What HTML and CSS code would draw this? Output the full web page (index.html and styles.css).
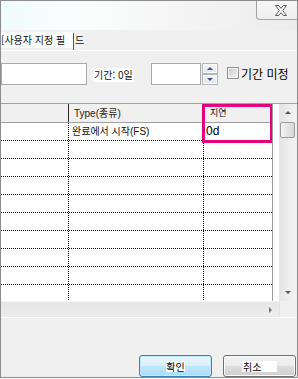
FILE: index.html
```html
<!DOCTYPE html>
<html lang="ko">
<head>
<meta charset="utf-8">
<title>사용자 지정 필드</title>
<link rel="stylesheet" href="styles.css">
</head>
<body>
<div class="window">
  <div class="titlebar">
    <div class="close-btn">
      <svg width="12" height="11" viewBox="0 0 12 11"><polygon points="0.5,0.5 3.7,0.5 6,3.3 8.3,0.5 11.5,0.5 7.8,5.5 11.5,10.5 8.3,10.5 6,7.7 3.7,10.5 0.5,10.5 4.2,5.5" fill="#f7f7f7" stroke="#5d5d5d" stroke-width="1" stroke-linejoin="round"/></svg>
    </div>
  </div>
  <div class="tabrow">
    <span class="tab-label">[사용자 지정 필</span><span class="tab-caret"></span><span class="tab-rest">드</span>
  </div>
  <div class="fields">
    <div class="textbox name-box"></div>
    <span class="dur-label">기간: 0일</span>
    <div class="textbox dur-box"></div>
    <div class="spin">
      <div class="spin-btn"><span class="tri-up"></span></div>
      <div class="spin-btn"><span class="tri-down"></span></div>
    </div>
    <div class="check"><span class="check-box"></span><span class="check-text">기간 미정</span></div>
  </div>
  <div class="grid">
    <div class="grid-main">
      <div class="table">
        <div class="row head">
          <div class="cell c1"></div>
          <div class="cell c2">Type(종류)</div>
          <div class="cell c3 delay-head">지연</div>
        </div>
        <div class="row"><div class="cell c1"></div><div class="cell c2">완료에서 시작(FS)</div><div class="cell c3 val">0d</div></div>
        <div class="row"><div class="cell c1"></div><div class="cell c2"></div><div class="cell c3"></div></div>
        <div class="row"><div class="cell c1"></div><div class="cell c2"></div><div class="cell c3"></div></div>
        <div class="row"><div class="cell c1"></div><div class="cell c2"></div><div class="cell c3"></div></div>
        <div class="row"><div class="cell c1"></div><div class="cell c2"></div><div class="cell c3"></div></div>
        <div class="row"><div class="cell c1"></div><div class="cell c2"></div><div class="cell c3"></div></div>
        <div class="row"><div class="cell c1"></div><div class="cell c2"></div><div class="cell c3"></div></div>
        <div class="row"><div class="cell c1"></div><div class="cell c2"></div><div class="cell c3"></div></div>
        <div class="row"><div class="cell c1"></div><div class="cell c2"></div><div class="cell c3"></div></div>
        <div class="row"><div class="cell c1"></div><div class="cell c2"></div><div class="cell c3"></div></div>
        <div class="highlight"></div>
      </div>
      <div class="vgap"></div>
      <div class="vscroll">
        <div class="sb-btn"><span class="tri-up gray"></span></div>
        <div class="thumb"></div>
        <div class="track"></div>
        <div class="sb-btn"><span class="tri-down gray"></span></div>
      </div>
      <div class="vedge"></div>
    </div>
    <div class="hscroll-row">
      <div class="hscroll"><span class="tri-right"></span></div>
      <div class="corner"></div>
    </div>
  </div>
  <div class="spacer"></div>
  <div class="footer">
    <button class="btn ok"><span class="btn-text">확인</span></button>
    <button class="btn cancel"><span class="btn-text">취소</span></button>
  </div>
</div>
</body>
</html>
```

FILE: styles.css
```css
* { box-sizing: border-box; }
html, body { margin: 0; padding: 0; background: #fff; }
body {
  width: 298px;
  height: 379px;
  overflow: hidden;
  font-family: "Noto Sans CJK KR", "Liberation Sans", sans-serif;
  color: #111;
}
.window {
  width: 298px;
  height: 378px;
  border: 1px solid #8c8c8c;
  background: #f0f0f0;
  display: flex;
  flex-direction: column;
  overflow: hidden;
}

/* title bar */
.titlebar {
  height: 29px;
  flex: none;
  display: flex;
  justify-content: flex-end;
  align-items: flex-start;
  background: linear-gradient(to right, #f1fcfd 0%, #fbfdfd 30%, #f6f6f6 55%, #ececec 100%);
}
.close-btn {
  width: 41px;
  height: 19px;
  border-left: 1px solid #a3a3a3;
  border-bottom: 1px solid #a3a3a3;
  border-bottom-left-radius: 4px;
  background: linear-gradient(#f7f7f7, #efefef);
  padding: 4px 0 0 18px;
}
.close-btn svg { display: block; }

/* tab row */
.tabrow {
  height: 21px;
  flex: none;
  border-bottom: 1px solid #fff;
  display: flex;
  align-items: flex-start;
  font-size: 10px;
  line-height: 16px;
}
.tab-label {
  margin-top: 2px;
  height: 16px;
  width: 72px;
  background: #fff;
  white-space: nowrap;
  overflow: hidden;
}
.tab-caret {
  margin-top: 3px;
  width: 1px;
  height: 17px;
  background: #555;
}
.tab-rest { margin-top: 2px; margin-left: 1px; }

/* fields row */
.fields {
  height: 22px;
  margin-top: 12px;
  flex: none;
  display: flex;
  align-items: flex-start;
}
.textbox {
  height: 22px;
  background: #fff;
  border: 1px solid #a9a9a9;
}
.name-box { width: 86px; }
.dur-label {
  margin: 5px 0 0 6px;
  width: 41px;
  height: 14px;
  background: #fff;
  font-size: 10px;
  line-height: 14px;
  padding-left: 1px;
  white-space: nowrap;
}
.dur-box { width: 50px; margin-left: 17px; }
.spin {
  margin-left: 1px;
  width: 16px;
  height: 22px;
  display: flex;
  flex-direction: column;
}
.spin-btn {
  flex: 1;
  border: 1px solid #b3b6ba;
  background: linear-gradient(#f5f7f9, #dfe4ea);
  box-shadow: inset 0 0 0 1px #fbfbfb;
  display: flex;
  align-items: center;
  justify-content: center;
}
.tri-up {
  width: 0; height: 0;
  border-left: 3px solid transparent;
  border-right: 3px solid transparent;
  border-bottom: 3px solid #3e5277;
}
.tri-down {
  width: 0; height: 0;
  border-left: 3px solid transparent;
  border-right: 3px solid transparent;
  border-top: 3px solid #3e5277;
}
.tri-up.gray { border-bottom-color: #555; }
.tri-down.gray { border-top-color: #555; }
.tri-right {
  width: 0; height: 0;
  border-top: 3px solid transparent;
  border-bottom: 3px solid transparent;
  border-left: 3px solid #777;
}
.check { display: flex; align-items: flex-start; margin-left: 9px; }
.check-box {
  margin-top: 4px;
  width: 12px;
  height: 12px;
  border: 1px solid #8e8f8f;
  background: linear-gradient(135deg, #cbcbcb, #f2f2f2);
  box-shadow: inset 0 0 0 1px #f6f6f6;
}
.check-text {
  margin-left: 2px;
  font-size: 12px;
  line-height: 21px;
  color: #000;
  white-space: nowrap;
}

/* grid */
.grid {
  margin-top: 18px;
  flex: none;
  border-top: 1px solid #a0a0a0;
}
.grid-main {
  height: 197px;
  display: flex;
  background: #fff;
}
.table {
  position: relative;
  width: 272px;
  flex: none;
  overflow: hidden;
  border-right: 1px solid #a0a0a0;
}
.row {
  display: flex;
  height: 18px;
  border-bottom: 1px dotted #000;
}
.row.head {
  height: 19px;
  background: #f0f0f0;
  border-bottom: 1px solid #a0a0a0;
}
.cell {
  height: 100%;
  font-size: 10px;
  line-height: 17px;
  white-space: nowrap;
  overflow: hidden;
}
.c1 { width: 68px; border-right: 1px dotted #000; }
.c2 { width: 135px; border-right: 1px dotted #000; padding-left: 3px; }
.c3 { width: 68px; padding-left: 2px; }
.head .c1, .head .c2 { border-right: 1px solid #2a2a2a; }
.head .c2 { padding-left: 5px; font-family: "Liberation Sans", "Noto Sans CJK KR", sans-serif; line-height: 19px; color: #2a1a10; }
.head .delay-head { padding-left: 6px; font-size: 9px; line-height: 18px; }
.row .c2 { font-family: "Liberation Sans", "Noto Sans CJK KR", sans-serif; }
.val {
  font-family: "Liberation Sans", sans-serif;
  font-size: 12px;
  line-height: 17px;
  color: #000;
}
.highlight {
  position: absolute;
  left: 201px;
  top: 0;
  width: 71px;
  height: 39px;
  border: 3px solid #e6007e;
}
.vgap { width: 6px; flex: none; background: #fff; }
.vscroll {
  width: 17px;
  flex: none;
  display: flex;
  flex-direction: column;
  background: linear-gradient(to right, #e3e3e3, #eeeeee 60%, #f2f2f2);
}
.sb-btn {
  height: 17px;
  flex: none;
  display: flex;
  align-items: center;
  justify-content: center;
}
.thumb {
  height: 16px;
  margin: 1px 1px 0 1px;
  flex: none;
  border: 1px solid #9a9a9a;
  border-radius: 2px;
  background: linear-gradient(to right, #f4f4f4, #e4e4e4 50%, #d8d8d8);
}
.track { flex: 1; }
.vedge { flex: 1; background: #f0f0f0; }
.hscroll-row {
  height: 17px;
  display: flex;
  border-bottom: 1px solid #fff;
}
.hscroll {
  width: 278px;
  flex: none;
  background: linear-gradient(#e6e6e6, #ececec);
  border-top: 1px solid #f4f4f4;
  display: flex;
  align-items: center;
  justify-content: flex-end;
  padding-right: 7px;
}
.corner { flex: 1; background: #f0f0f0; border-left: 1px solid #e2e2e2; }

/* footer */
.spacer { flex: 1; }
.footer {
  flex: none;
  display: flex;
  justify-content: flex-end;
  gap: 11px;
  padding-right: 1px;
}
.btn {
  width: 73px;
  height: 22px;
  border-radius: 3px;
  padding: 0;
  display: flex;
  align-items: center;
  justify-content: center;
  font-family: "Noto Sans CJK KR", sans-serif;
  font-size: 10px;
  line-height: 11px;
  color: #000;
}
.btn.ok {
  border: 1px solid #3c7fb1;
  background: linear-gradient(#eaf6fd 0%, #d9f0fc 48%, #bee6fd 52%, #a9dbf6 100%);
  box-shadow: inset 0 0 0 1px #bfeafc;
}
.btn.cancel {
  border: 1px solid #707070;
  background: linear-gradient(#f2f2f2 0%, #ebebeb 48%, #dddddd 52%, #cfcfcf 100%);
  box-shadow: inset 0 0 0 1px #fafafa;
}
.btn-text { height: 11px; background: #f6fbfe; }
.cancel .btn-text { width: 35px; text-align: left; padding-left: 1px; background: #fff; }
```
